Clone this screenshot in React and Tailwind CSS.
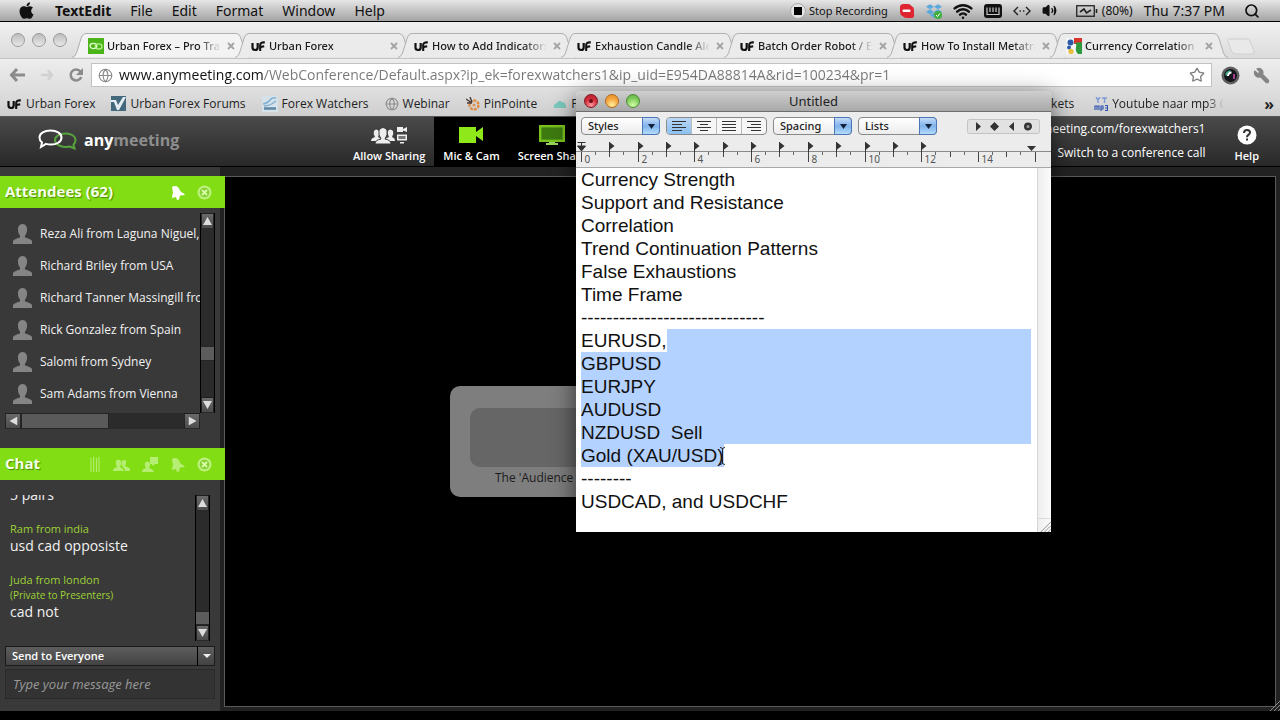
import React from "react";
import { FaApple, FaDropbox } from "react-icons/fa";
import { Search, Volume2, Wifi, Wrench, Star, Globe } from "lucide-react";

/* ---------- macOS menu bar ---------- */

function MenuBar() {
  return (
    <header className="flex h-[22px] shrink-0 items-center border-b border-black bg-linear-to-b from-[#e6e6e6] to-[#a4a4a4] pr-5 pl-[17px] text-[14px] leading-5 text-[#111]">
      <nav className="flex items-center gap-[19px]">
        <button aria-label="Apple menu">
          <FaApple className="size-[19px]" />
        </button>
        <button className="font-bold">TextEdit</button>
        <button>File</button>
        <button>Edit</button>
        <button>Format</button>
        <button>Window</button>
        <button>Help</button>
      </nav>
      <div className="ml-auto flex items-center gap-[11px]">
        <button className="flex items-center gap-[3px] text-[11px]">
          <svg className="size-4" viewBox="0 0 16 16" aria-hidden="true">
            <circle cx="8" cy="8" r="7.5" fill="#e2e2e2" stroke="#aaa" />
            <rect x="4" y="4" width="8" height="8" fill="#000" />
          </svg>
          Stop Recording
        </button>
        <svg className="size-4" viewBox="0 0 16 16" aria-hidden="true">
          <path d="M1 4q0-3 4-3h4q2 0 3.500 2q2.500 1 2.500 4v4q1 4-3 4H8q-3 0-4.500-2Q1 12 1 9z" fill="#dd2430" />
          <rect x="3.5" y="6.5" width="8" height="2.6" rx="1" fill="#fff" />
        </svg>
        <span className="flex items-center">
          <FaDropbox className="size-4 text-[#5aa9dc]" />
          <svg className="-ml-2 size-2 self-end" viewBox="0 0 8 8" aria-hidden="true">
            <circle cx="4" cy="4" r="4" fill="#3dae3b" />
            <path d="M2 4l1.5 1.6L6 2.4" stroke="#fff" fill="none" />
          </svg>
        </span>
        <Wifi className="size-5" strokeWidth={3} />
        <svg className="h-[14px] w-[18px]" viewBox="0 0 18 14" aria-hidden="true">
          <rect width="18" height="14" rx="3" fill="#111" />
          <path d="M3 3.500v7h12v-7M6 3.500v4.500M9 3.500v4.500M12 3.500v4.500" stroke="#ccc" fill="none" strokeWidth="1.2" />
        </svg>
        <svg className="h-[10px] w-[18px]" viewBox="0 0 18 10" aria-hidden="true">
          <path d="M5 1L1 5l4 4M13 1l4 4-4 4" stroke="#222" fill="none" strokeWidth="1.4" />
          <path d="M6.5 5h1.4M10 5h1.4" stroke="#222" strokeWidth="1.4" />
        </svg>
        <Volume2 className="size-[15px]" fill="#111" strokeWidth={2.2} />
        <span className="ml-2 flex items-center gap-1 text-[12px]">
          <svg className="h-3 w-[22px]" viewBox="0 0 22 12" aria-hidden="true">
            <rect x=".75" y=".75" width="17.5" height="10.5" fill="none" stroke="#222" strokeWidth="1.3" />
            <path d="M20.5 4v4" stroke="#222" strokeWidth="1.6" />
            <path d="M4 7l4-3 2.5 4L15 5" fill="none" stroke="#222" strokeWidth="1.6" />
          </svg>
          (80%)
        </span>
        <span>Thu 7:37 PM</span>
        <button aria-label="Search" className="ml-2">
          <Search className="size-4" strokeWidth={2.6} />
        </button>
      </div>
    </header>
  );
}

/* ---------- favicons ---------- */

function UfIcon() {
  return (
    <svg className="h-4 w-[15px] shrink-0" viewBox="0 0 15 16" aria-hidden="true">
      <path d="M1.5 5v4.5q0 2.5 2.6 2.5q2.6 0 2.6-2.8V5" fill="none" stroke="#111" strokeWidth="2.2" />
      <path d="M9.2 13V7q0-3 4.6-2.6M8.6 9.2l4.6-1" fill="none" stroke="#111" strokeWidth="2.1" />
    </svg>
  );
}

function AnyMeetingIcon() {
  return (
    <svg className="size-4 shrink-0" viewBox="0 0 16 16" aria-hidden="true">
      <rect width="16" height="16" fill="#4bb417" />
      <ellipse cx="5.4" cy="8" rx="3.4" ry="2.6" fill="none" stroke="#e4ffd4" strokeWidth="1.3" />
      <ellipse cx="10.6" cy="8.4" rx="3.4" ry="2.6" fill="none" stroke="#b4f18c" strokeWidth="1.3" />
    </svg>
  );
}

function GoogleIcon() {
  return (
    <svg className="size-4 shrink-0" viewBox="0 0 16 16" aria-hidden="true">
      <rect width="16" height="16" fill="#f4f4f4" />
      <rect x="8" width="8" height="6" fill="#d9342b" />
      <path d="M8 5q3 0 2 4t2 7h4V4z" fill="#2f9a3c" />
      <circle cx="4.5" cy="4.5" r="3" fill="#2c5aa8" />
      <circle cx="3" cy="9.5" r="2" fill="#2c5aa8" />
      <circle cx="5" cy="13.4" r="2.6" fill="#e9bf42" />
    </svg>
  );
}

/* ---------- browser ---------- */

const TABS = [
  { title: "Urban Forex – Pro Trader", icon: <AnyMeetingIcon />, active: true },
  { title: "Urban Forex", icon: <UfIcon /> },
  { title: "How to Add Indicators", icon: <UfIcon /> },
  { title: "Exhaustion Candle Alert", icon: <UfIcon /> },
  { title: "Batch Order Robot / EA", icon: <UfIcon /> },
  { title: "How To Install Metatrader", icon: <UfIcon /> },
  { title: "Currency Correlation", icon: <GoogleIcon /> },
];

function Tab({ title, icon, active }) {
  return (
    <div className="relative -mr-[15px] flex h-[25px] min-w-0 basis-[178px] items-center gap-[3px] pt-px pr-3 pl-4">
      <svg
        className="absolute inset-0 size-full"
        viewBox="0 0 178 25"
        preserveAspectRatio="none"
        aria-hidden="true"
      >
        <path
          d="M0 24.5Q3 24 4.500 20L9.500 4Q11 .5 14 .5H164Q167 .5 168.500 4L173.500 20Q175 24 178 24.500"
          fill={active ? "#f3f3f3" : "#ebebeb"}
          stroke="#b0b0b0"
        />
      </svg>
      <span className="relative">{icon}</span>
      <button className="relative min-w-0 flex-1 overflow-hidden mask-r-from-80% text-left text-[11px] leading-4 font-medium whitespace-nowrap text-[#1a1a1a]">
        {title}
      </button>
      <button aria-label="Close tab" className="relative p-[3px]">
        <svg className="size-2" viewBox="0 0 8 8" aria-hidden="true">
          <path d="M1 1l6 6M7 1L1 7" stroke="#a3a3a3" strokeWidth="1.8" />
        </svg>
      </button>
    </div>
  );
}

function TabStrip() {
  return (
    <div className="flex h-[37px] shrink-0 items-end border-b border-[#c4c4c4] bg-linear-to-b from-[#f0f0f0] to-[#dcdcdc] pl-[11px]">
      <div className="flex w-[61px] shrink-0 items-center gap-[7px] pb-[11px]">
        {["Close", "Minimize", "Zoom"].map((name) => (
          <button
            key={name}
            aria-label={name}
            className="size-[14px] rounded-full border border-[#9a9a9a] bg-linear-to-b from-[#bcbcbc] to-[#e8e8e8]"
          />
        ))}
      </div>
      {TABS.map((tab) => (
        <Tab key={tab.title} {...tab} />
      ))}
      <button aria-label="New tab" className="ml-[14px] pb-[3px]">
        <svg className="h-[17px] w-7" viewBox="0 0 28 17" aria-hidden="true">
          <path d="M2 1h18q2 0 3 2l4 10q1 3-2 3H9q-3 0-4-2L1 4Q0 1 2 1z" fill="#e9e9e9" stroke="#cfcfcf" />
        </svg>
      </button>
    </div>
  );
}

function Toolbar() {
  return (
    <div className="flex h-8 shrink-0 items-center bg-linear-to-b from-[#ededed] to-[#dedede] pr-[10px] pl-[9px]">
      <div className="flex w-[82px] shrink-0 items-center gap-[14px]">
        <button aria-label="Back">
          <svg className="h-4 w-[17px]" viewBox="0 0 17 16" aria-hidden="true">
            <path d="M8 2L2.500 8L8 14M3 8h13" fill="none" stroke="#8b8b8b" strokeWidth="3" />
          </svg>
        </button>
        <button aria-label="Forward">
          <svg className="h-3 w-[14px]" viewBox="0 0 14 12" aria-hidden="true">
            <path d="M8 1.500L12 6L8 10.500M1 6h10" fill="none" stroke="#d0d0d0" strokeWidth="2.500" />
          </svg>
        </button>
        <button aria-label="Reload">
          <svg className="size-4" viewBox="0 0 16 16" aria-hidden="true">
            <path d="M12.500 4.500A5.500 5.500 0 1 0 13.300 10" fill="none" stroke="#8b8b8b" strokeWidth="2.500" />
            <path d="M15 1v7H8z" fill="#8b8b8b" />
          </svg>
        </button>
      </div>
      <div className="flex h-6 min-w-0 flex-1 items-center gap-[6px] border border-[#c2c2c2] bg-white px-[6px]">
        <Globe className="size-[15px] shrink-0 text-[#8c8c8c]" strokeWidth={1.8} />
        <input
          aria-label="Address"
          className="min-w-0 flex-1 bg-[linear-gradient(90deg,#111_144px,#777_144px)] bg-clip-text font-['Open_Sans',sans-serif] text-[14px] leading-5 text-transparent outline-none"
          defaultValue="www.anymeeting.com/WebConference/Default.aspx?ip_ek=forexwatchers1&ip_uid=E954DA88814A&rid=100234&pr=1"
        />
        <button aria-label="Bookmark this page">
          <Star className="size-4 text-[#808080]" />
        </button>
      </div>
      <button aria-label="Screen capture" className="ml-[9px]">
        <svg className="size-[19px]" viewBox="0 0 19 19" aria-hidden="true">
          <circle cx="9.500" cy="9.500" r="9" fill="#5f5f5f" />
          <circle cx="9.500" cy="9.500" r="6.500" fill="#15151c" />
          <path d="M5 9.500a4.500 4.500 0 0 1 4.500-4.500" stroke="#37b58b" strokeWidth="1.600" fill="none" />
          <path d="M13 8v5" stroke="#a83c8f" strokeWidth="2" fill="none" />
          <path d="M7 10q0-3.500 3.500-3.500" stroke="#fff" strokeWidth="2" fill="none" />
        </svg>
      </button>
      <button aria-label="Settings" className="ml-[13px]">
        <Wrench className="size-[17px] -scale-x-100 text-[#858585]" fill="#858585" />
      </button>
    </div>
  );
}

function Bookmark({ icon, children }) {
  return (
    <a href="#" className="flex shrink-0 items-center gap-1 whitespace-nowrap">
      {icon}
      {children}
    </a>
  );
}

function BookmarksBar() {
  return (
    <nav className="flex h-[26px] shrink-0 items-center border-b border-[#555] bg-linear-to-b from-[#dedede] to-[#cecece] pr-[6px] pl-[7px] font-['Open_Sans',sans-serif] text-[12px] leading-4 font-medium text-[#222]">
      <div className="flex items-center gap-4">
        <Bookmark icon={<UfIcon />}>Urban Forex</Bookmark>
        <Bookmark
          icon={
            <svg className="size-[15px]" viewBox="0 0 15 15" aria-hidden="true">
              <rect width="15" height="15" fill="#44697c" />
              <path d="M0 4h5l2 5L12 1h3L8 14H6L3 6H0z" fill="#e4eef2" />
            </svg>
          }
        >
          Urban Forex Forums
        </Bookmark>
        <Bookmark
          icon={
            <svg className="size-4" viewBox="0 0 16 16" aria-hidden="true">
              <rect width="16" height="16" fill="#d5e2ea" />
              <path d="M1 8q5-1 7-4t6-2M2 10q6 0 12-5" stroke="#7fb0d2" strokeWidth="1.400" fill="none" />
              <path d="M2 12.500h12" stroke="#5d86a3" strokeWidth="2.500" />
            </svg>
          }
        >
          Forex Watchers
        </Bookmark>
        <Bookmark icon={<Globe className="size-[14px] text-[#8c8c8c]" strokeWidth={1.8} />}>Webinar</Bookmark>
        <Bookmark
          icon={
            <svg className="size-[14px]" viewBox="0 0 14 14" aria-hidden="true">
              <circle cx="8" cy="8" r="4.500" fill="none" stroke="#dd8e4a" strokeWidth="2.500" strokeDasharray="3 1" />
              <path d="M0 2l6 4M1 6l5 0M4 0l2 5" stroke="#4a3a3a" strokeWidth="1.400" />
              <circle cx="8" cy="8" r="1.500" fill="#dd8e4a" />
            </svg>
          }
        >
          PinPointe
        </Bookmark>
        <Bookmark
          icon={
            <svg className="size-[14px]" viewBox="0 0 14 14" aria-hidden="true">
              <path d="M1 11q-1-4 3-5q2-4 5-1q4 0 4 6z" fill="#7cc9bd" />
            </svg>
          }
        >
          Forex
        </Bookmark>
      </div>
      <div className="ml-auto flex items-center gap-5">
        <Bookmark>Markets</Bookmark>
        <Bookmark
          icon={
            <svg className="size-[14px]" viewBox="0 0 14 14" aria-hidden="true">
              <path d="M2 0l2 3 2-3M4 3v3M8 1h5M10.500 1v5" stroke="#7d98d8" strokeWidth="1.400" fill="none" />
              <path d="M1 13V9h4v4M3 9v4M7 14V9h2v3H7M11 8.500h2.500v5H11M11 11h2" stroke="#3358b4" strokeWidth="1.200" fill="none" />
            </svg>
          }
        >
          <span className="w-28 overflow-hidden mask-r-from-85%">Youtube naar mp3 Converter</span>
        </Bookmark>
        <button aria-label="More bookmarks" className="ml-5 text-[16px] leading-4 font-bold">
          »
        </button>
      </div>
    </nav>
  );
}

/* ---------- meeting header ---------- */

function Logo() {
  return (
    <div className="flex items-center gap-[6px]">
      <svg className="h-[22px] w-10" viewBox="0 0 40 22" aria-hidden="true">
        <path
          d="M28 4.500c5 0 9.500 2.500 9.500 6.500c0 2-.8 3.500-2 4.500l1 4l-4.500-2c-6 1.200-15-.5-15-6.500c0-4.500 5.500-6.500 11-6.500z"
          fill="none"
          stroke="#57a43c"
          strokeWidth="2"
        />
        <path
          d="M12.500 1.500c6 0 11 2.500 11 7s-5 7.200-11 7c-1.500 0-3-.2-4.500-.6L3 18l1-4.500C2.500 12.300 1.500 10.500 1.500 8.500c0-4.500 5-7 11-7z"
          fill="none"
          stroke="#fff"
          strokeWidth="2"
        />
      </svg>
      <span className="text-[16px] leading-5 font-bold text-white">
        any<span className="text-[#8e8e8e]">meeting</span>
      </span>
    </div>
  );
}

function PeopleIcon() {
  return (
    <svg className="h-5 w-9" viewBox="0 0 36 20" aria-hidden="true" fill="#eee">
      <path d="M0 16q0-3 4-4q-2-3-1-6q2-3 5 0q1 3-1 6q3 1 3 4z" />
      <path d="M14 16q0-3 4-4q-2-3-1-6q2-3 5 0q1 3-1 6q3 1 3 4z" />
      <path d="M4 19q0-4 6-5q-3-4-2-9q4-5 8 0q1 5-2 9q6 1 6 5z" stroke="#3a3a3a" />
      <path d="M26 2h6v2l4-2v5l-4-1.500V7h-6z" />
      <path d="M26 9.500h10v6H26zM29 17h4v1.500h-4z" />
      <path d="M27.500 11h7v3h-7z" fill="#777" />
    </svg>
  );
}

function CameraIcon() {
  return (
    <svg className="h-5 w-6" viewBox="0 0 24 20" aria-hidden="true">
      <path d="M0 2h17v5l7-5v14l-7-5v7H0z" fill="#8ee81a" />
    </svg>
  );
}

function ScreenIcon() {
  return (
    <svg className="h-5 w-[26px]" viewBox="0 0 26 20" aria-hidden="true">
      <rect x="1.200" y="1.200" width="23.600" height="14.600" fill="#3d7a10" stroke="#78c11f" strokeWidth="2.400" />
      <path d="M10 17h6v1h3v2H7v-2h3z" fill="#9ad45b" />
    </svg>
  );
}

function HeaderButton({ icon, label, className = "" }) {
  return (
    <button
      className={`flex flex-col items-center gap-[3px] px-[9px] pt-2 text-[11px] leading-4 font-semibold text-white ${className}`}
    >
      {icon}
      {label}
    </button>
  );
}

function MeetingHeader() {
  return (
    <header className="flex h-[50px] shrink-0 border-b border-black bg-linear-to-b from-[#4a4a4a] to-[#292929] font-['Open_Sans',sans-serif] font-medium text-white">
      <div className="flex w-[344px] shrink-0 items-center pb-1 pl-[38px]">
        <Logo />
      </div>
      <HeaderButton icon={<PeopleIcon />} label="Allow Sharing" />
      <HeaderButton icon={<CameraIcon />} label="Mic & Cam" className="bg-black" />
      <HeaderButton icon={<ScreenIcon />} label="Screen Share" className="bg-black" />
      <div className="ml-auto flex flex-col items-end gap-1 pt-[2px] pr-5 text-[12px] leading-5">
        <a href="#">anymeeting.com/forexwatchers1</a>
        <a href="#">Switch to a conference call</a>
      </div>
      <HeaderButton
        icon={
          <svg className="size-5" viewBox="0 0 20 20" aria-hidden="true">
            <circle cx="10" cy="10" r="9.500" fill="#fff" />
            <path d="M7 8q0-3 3-3t3 2.600q0 1.500-1.700 2.400q-1.300.7-1.300 2.200M10 13.600v2" stroke="#333" strokeWidth="2" fill="none" />
          </svg>
        }
        label="Help"
        className="mr-3"
      />
    </header>
  );
}

/* ---------- sidebar ---------- */

const ATTENDEES = [
  "Reza Ali from Laguna Niguel, CA",
  "Richard Briley from USA",
  "Richard Tanner Massingill from USA",
  "Rick Gonzalez from Spain",
  "Salomi from Sydney",
  "Sam Adams from Vienna",
];

function Arrow({ className = "" }) {
  return (
    <svg className={`h-2 w-[9px] ${className}`} viewBox="0 0 9 8" aria-hidden="true">
      <path d="M4.500 0L9 8H0z" fill="#ddd" />
    </svg>
  );
}

function ScrollButton({ label, arrow = "" }) {
  return (
    <button
      aria-label={label}
      className="flex h-4 w-full max-w-4 shrink-0 items-center justify-center border border-black/60 bg-linear-to-b from-[#6a6a6a] to-[#4c4c4c]"
    >
      <Arrow className={arrow} />
    </button>
  );
}

function VerticalScroll({ thumb }) {
  return (
    <div className="flex w-[15px] shrink-0 flex-col border-x border-black bg-[#2b2b2b]">
      <ScrollButton label="Scroll up" />
      <div className="flex flex-1 flex-col">
        <div className={`w-full border-y border-black/60 bg-[#5c5c5c] ${thumb}`} />
      </div>
      <ScrollButton label="Scroll down" arrow="rotate-180" />
    </div>
  );
}

function PinIcon({ fill = "#fff" }) {
  return (
    <svg className="h-[15px] w-[14px]" viewBox="0 0 14 15" aria-hidden="true">
      <path d="M1 2q3-2 6 0l3 5q3 1 4 3l-5 .5-1 4-2 .5-1-3-4 1q0-3 1-5z" fill={fill} />
    </svg>
  );
}

function CloseIcon() {
  return (
    <svg className="size-[15px]" viewBox="0 0 15 15" aria-hidden="true">
      <circle cx="7.500" cy="7.500" r="7" fill="#bdf07c" />
      <circle cx="7.500" cy="7.500" r="4.800" fill="#86cf32" />
      <path d="M5 5l5 5M10 5l-5 5" stroke="#d8ffa8" strokeWidth="1.800" />
    </svg>
  );
}

function PanelHeader({ title, children }) {
  return (
    <div className="relative -mr-[5px] flex h-8 shrink-0 items-center bg-[#82dd14] pr-[13px] pb-[2px] pl-[5px]">
      <h2 className="flex-1 text-[15px] leading-5 font-bold text-[#f6ffe9] [text-shadow:1px_1px_1px_#4a8a00]">{title}</h2>
      <div className="flex items-center gap-3 pt-[3px]">
        {children}
        <button aria-label="Close panel">
          <CloseIcon />
        </button>
      </div>
    </div>
  );
}

function Attendees() {
  return (
    <section className="flex h-[272px] shrink-0 flex-col">
      <PanelHeader title="Attendees (62)">
        <button aria-label="Pin panel">
          <PinIcon />
        </button>
      </PanelHeader>
      <div className="mt-[5px] flex h-[200px] pr-[5px]">
        <ul className="min-w-0 flex-1 overflow-hidden pt-[5px] pl-3 text-[12px] leading-4 font-medium text-[#f2f2f2]">
          {ATTENDEES.map((name) => (
            <li key={name} className="flex h-8 items-center gap-[7px] whitespace-nowrap">
              <svg className="h-5 w-[21px] shrink-0" viewBox="0 0 21 20" aria-hidden="true">
                <path d="M1 20v-3q1-2 7-3.500v-2Q5.500 9 6 4q1-4 4.500-4T15 4q.5 5-2 7.500v2q6 1.500 7 3.500v3z" fill="#858585" />
              </svg>
              {name}
            </li>
          ))}
        </ul>
        <VerticalScroll thumb="mt-[117px] h-[15px]" />
      </div>
      <div className="ml-[5px] flex h-4 w-[195px] bg-[#2b2b2b]">
        <ScrollButton label="Scroll left" arrow="-rotate-90" />
        <div className="flex-1">
          <div className="h-full w-[88px] border border-black/60 bg-[#5a5a5a]" />
        </div>
        <ScrollButton label="Scroll right" arrow="rotate-90" />
      </div>
    </section>
  );
}

function Message({ from, note, children }) {
  return (
    <li>
      <p className="text-[11px] leading-4 text-[#9ed235]">{from}</p>
      {note && <p className="text-[10px] leading-[15px] text-[#9ed235]">{note}</p>}
      <p className="text-[14px] leading-[18px] font-medium text-[#f2f2f2]">{children}</p>
    </li>
  );
}

function Chat() {
  return (
    <section className="flex flex-1 flex-col">
      <PanelHeader title="Chat">
        <svg className="mr-px h-[15px] w-[10px]" viewBox="0 0 10 15" aria-hidden="true">
          <path d="M1 1v14M3.700 0v15M6.400 1v14M9 0v15" stroke="#baf07c" />
        </svg>
        <svg className="h-[14px] w-[17px]" viewBox="0 0 17 14" aria-hidden="true" fill="#b6ee74">
          <path d="M0 13q0-3 4-4q-2-3-1-6q2-3 5 0q1 3-1 6q3 1 4 4zM9 8q-1-3 0-5q2-2 4 0q1 2-1 5q4 1 5 3v2h-5q0-3-3-5z" />
        </svg>
        <svg className="size-[17px]" viewBox="0 0 17 17" aria-hidden="true" fill="#b6ee74">
          <path d="M0 16q0-3 4-4q-2-3-1-5q2-3 5 0q1 2-1 5q4 1 5 4zM8 1h8v7h-3l-2 2-1-2H8z" />
        </svg>
        <button aria-label="Pin panel">
          <PinIcon fill="#b6ee74" />
        </button>
      </PanelHeader>
      <div className="mt-[15px] flex h-[146px] pr-[10px]">
        <ul className="flex min-w-0 flex-1 flex-col justify-end gap-[17px] overflow-hidden pb-5 pl-[10px]">
          <Message from="Ram from india">5 pairs</Message>
          <Message from="Ram from india">usd cad opposiste</Message>
          <Message from="Juda from london" note="(Private to Presenters)">
            cad not
          </Message>
        </ul>
        <VerticalScroll thumb="mt-auto h-[14px]" />
      </div>
      <div className="relative mt-[5px] ml-[5px] flex h-5 w-[210px]">
        <select
          aria-label="Send to"
          className="w-full appearance-none border border-[#1a1a1a] bg-linear-to-b from-[#5e5e5e] to-[#434343] pl-[6px] text-[11px] leading-4 font-semibold text-white"
        >
          <option>Send to Everyone</option>
        </select>
        <span className="pointer-events-none absolute inset-y-0 right-0 flex w-[18px] items-center justify-center border-l border-black">
          <svg className="h-1 w-2" viewBox="0 0 8 4" aria-hidden="true">
            <path d="M0 0h8L4 4z" fill="#eee" />
          </svg>
        </span>
      </div>
      <input
        aria-label="Message"
        placeholder="Type your message here"
        className="mt-[3px] ml-[5px] h-[30px] w-[210px] border border-[#2a2a2a] bg-[#333] px-[7px] text-[13px] italic placeholder:text-[#9a9a9a]"
      />
    </section>
  );
}

/* ---------- stage ---------- */

function Stage() {
  return (
    <main className="flex min-w-0 flex-1 items-center justify-center border border-[#5a5a5a] bg-black">
      <div className="flex h-[111px] w-[600px] flex-col rounded-[10px] bg-[#7e7e7e] px-5 pt-[22px]">
        <div className="h-[59px] rounded-[10px] bg-[#666]" />
        <p className="overflow-hidden pt-[3px] pl-[25px] text-[12px] leading-4 whitespace-nowrap text-[#1c1c1c]">
          The 'Audience View' window
        </p>
      </div>
    </main>
  );
}

/* ---------- TextEdit window ---------- */

function AquaSelect({ label }) {
  return (
    <span className="relative flex h-[18px] w-[79px]">
      <select
        aria-label={label}
        className="w-full appearance-none rounded-[4px] border border-[#8a8a8a] bg-linear-to-b from-white to-[#ececec] pl-[6px] text-[11px] leading-4 font-medium text-[#222]"
      >
        <option>{label}</option>
      </select>
      <span className="pointer-events-none absolute inset-y-0 right-0 flex w-[18px] items-center justify-center rounded-r-[4px] border border-[#4d75b5] bg-linear-to-b from-[#c5dcf7] via-[#7fb2ec] to-[#b4dcfb]">
        <svg className="h-[5px] w-[7px]" viewBox="0 0 7 5" aria-hidden="true">
          <path d="M0 0h7L3.500 5z" fill="#14233c" />
        </svg>
      </span>
    </span>
  );
}

const ALIGNMENTS = [
  { name: "Align left", d: "M0 .5h14M0 3.500h10M0 6.500h14M0 9.500h10", on: true },
  { name: "Center", d: "M0 .5h14M3 3.500h8M0 6.500h14M3 9.500h8" },
  { name: "Justify", d: "M0 .5h14M0 3.500h14M0 6.500h14M0 9.500h14" },
  { name: "Align right", d: "M0 .5h14M4 3.500h10M0 6.500h14M4 9.500h10" },
];

const UNIT = 28.35;
const UNITS = Array.from({ length: 17 }, (_, i) => i);

function Ruler() {
  return (
    <svg className="block h-[27px] w-full" aria-hidden="true">
      <path d="M0 11.500h475" stroke="#8a8a8a" />
      {UNITS.map((n) => {
        const x = Math.round(5 + n * UNIT) + 0.5;
        return (
          <g key={n}>
            <path d={`M${x} 12v${n % 2 ? 5 : 10}`} stroke="#444" />
            {n < 16 && <path d={`M${x + 14} 12v3`} stroke="#666" />}
            {n > 0 && n < 13 && <path d={`M${x} 2v10`} stroke="#333" />}
            {n > 0 && n < 13 && <path d={`M${x} 2l5 4-5 4z`} fill="#333" />}
            {n % 2 === 0 && n < 16 && (
              <text x={x + 3} y="23" fontSize="10" fill="#555">
                {n}
              </text>
            )}
          </g>
        );
      })}
      <path d="M1.500 2.500h8M1.500 6h8l-4 5zM5.500 3v8" stroke="#333" fill="#333" />
      <path d="M451 6h9l-4.500 5z" fill="#333" />
    </svg>
  );
}

const TOPICS = [
  "Currency Strength",
  "Support and Resistance",
  "Correlation",
  "Trend Continuation Patterns",
  "False Exhaustions",
  "Time Frame",
  "-----------------------------",
];

function TextEditWindow() {
  return (
    <section className="absolute top-[91px] left-[576px] flex h-[441px] w-[475px] flex-col overflow-hidden rounded-t-[5px] bg-white shadow-[0_6px_24px_rgba(0,0,0,0.6)]">
      <header className="relative flex h-[21px] shrink-0 items-center gap-[7px] border-b border-[#6d6d6d] bg-linear-to-b from-[#cfcfcf] to-[#a8a8a8] pl-2">
        <button aria-label="Close" className="flex size-[14px] items-center justify-center rounded-full border border-[#7c1520] bg-[radial-gradient(circle_at_50%_85%,#ff9aa0,#d22a38_55%,#b3202d)]">
          <span className="size-1 rounded-full bg-[#6d0a14]" />
        </button>
        <button aria-label="Minimize" className="size-[14px] rounded-full border border-[#b06a1c] bg-[radial-gradient(circle_at_50%_85%,#ffee9a,#f3a33c_60%,#e28a2a)]" />
        <button aria-label="Zoom" className="size-[14px] rounded-full border border-[#4c8b35] bg-[radial-gradient(circle_at_50%_85%,#d4ffa8,#7cc95a_60%,#5cae42)]" />
        <h1 className="pointer-events-none absolute inset-x-0 text-center text-[13px] leading-5 text-[#222]">Untitled</h1>
      </header>
      <div className="shrink-0 border-b border-[#a8a8a8] bg-[#ececec]">
        <div className="flex h-7 items-center gap-[6px] pr-[11px] pl-[5px]">
          <AquaSelect label="Styles" />
          <div className="flex h-[18px] w-[101px] overflow-hidden rounded-[4px] border border-[#8a8a8a] bg-[#f6f6f6]">
            {ALIGNMENTS.map(({ name, d, on }) => (
              <button
                key={name}
                aria-label={name}
                className={`flex flex-1 items-center justify-center border-r border-[#bbb] last:border-r-0 ${
                  on ? "bg-linear-to-b from-[#b9d7f5] to-[#8cc0f0]" : ""
                }`}
              >
                <svg className="h-[10px] w-[14px]" viewBox="0 0 14 10" aria-hidden="true">
                  <path d={d} stroke="#333" />
                </svg>
              </button>
            ))}
          </div>
          <AquaSelect label="Spacing" />
          <AquaSelect label="Lists" />
          <svg className="ml-auto h-4 w-[73px]" viewBox="0 0 73 16" aria-hidden="true">
            <rect x=".5" y="1.500" width="72" height="14" rx="2" fill="#e2e2e2" stroke="#c4c4c4" />
            <path d="M9 4v9l5-4.500zM27.500 4l4.500 4.500-4.500 4.500-4.500-4.500zM47 4v9l-5-4.500z" fill="#333" />
            <circle cx="61" cy="8.500" r="2.800" fill="#999" stroke="#333" strokeWidth="2.400" />
          </svg>
        </div>
        <Ruler />
      </div>
      <div className="flex min-h-0 flex-1">
        <article className="flex-1 pl-[5px] font-['Liberation_Sans',Arial,sans-serif] text-[19px] leading-[23px] text-[#111]">
          {TOPICS.map((line) => (
            <p key={line}>{line}</p>
          ))}
          <p className="flex">
            EURUSD,
            <span className="flex-1 bg-[#b4d2ff]" />
          </p>
          <div className="bg-[#b4d2ff]">
            <p>GBPUSD</p>
            <p>EURJPY</p>
            <p>AUDUSD</p>
            <p className="whitespace-pre">NZDUSD  Sell</p>
          </div>
          <p className="flex items-center">
            <span className="bg-[#b4d2ff]">Gold (XAU/USD)</span>
            <svg className="-ml-[5px] h-[18px] w-[7px]" viewBox="0 0 7 18" aria-hidden="true">
              <path d="M1 .5q2 0 2.500 1.500Q4 .5 6 .5M3.500 2v14M1 17.500q2 0 2.500-1.500q.5 1.500 2.500 1.500" fill="none" stroke="#222" />
            </svg>
          </p>
          <p>--------</p>
          <p>USDCAD, and USDCHF</p>
        </article>
        <div className="ml-[6px] flex w-[14px] flex-col justify-end border-l border-[#d6d6d6] bg-linear-to-r from-[#eee] to-[#fbfbfb]">
          <svg className="h-[14px] w-full border-t border-[#ddd]" viewBox="0 0 14 14" aria-hidden="true">
            <path d="M3 14L14 3M7 14l7-7M11 14l3-3" stroke="#888" />
          </svg>
        </div>
      </div>
    </section>
  );
}

export default function App() {
  return (
    <div className="relative flex min-h-screen flex-col overflow-hidden bg-black pb-[9px] font-['Noto_Sans',sans-serif]">
      <MenuBar />
      <TabStrip />
      <Toolbar />
      <BookmarksBar />
      <MeetingHeader />
      <div className="relative flex flex-1 bg-[#222] font-['Open_Sans',sans-serif]">
        <aside className="mr-1 flex w-[220px] shrink-0 flex-col bg-[#393939] pt-[9px]">
          <Attendees />
          <Chat />
        </aside>
        <div className="flex min-w-0 flex-1 pt-[9px] pr-1 pb-1">
          <Stage />
        </div>
        <svg className="absolute right-0 bottom-0 size-3" viewBox="0 0 12 12" aria-hidden="true">
          <path d="M2 12L12 2M6 12l6-6M10 12l2-2" stroke="#888" />
        </svg>
      </div>
      <TextEditWindow />
    </div>
  );
}
